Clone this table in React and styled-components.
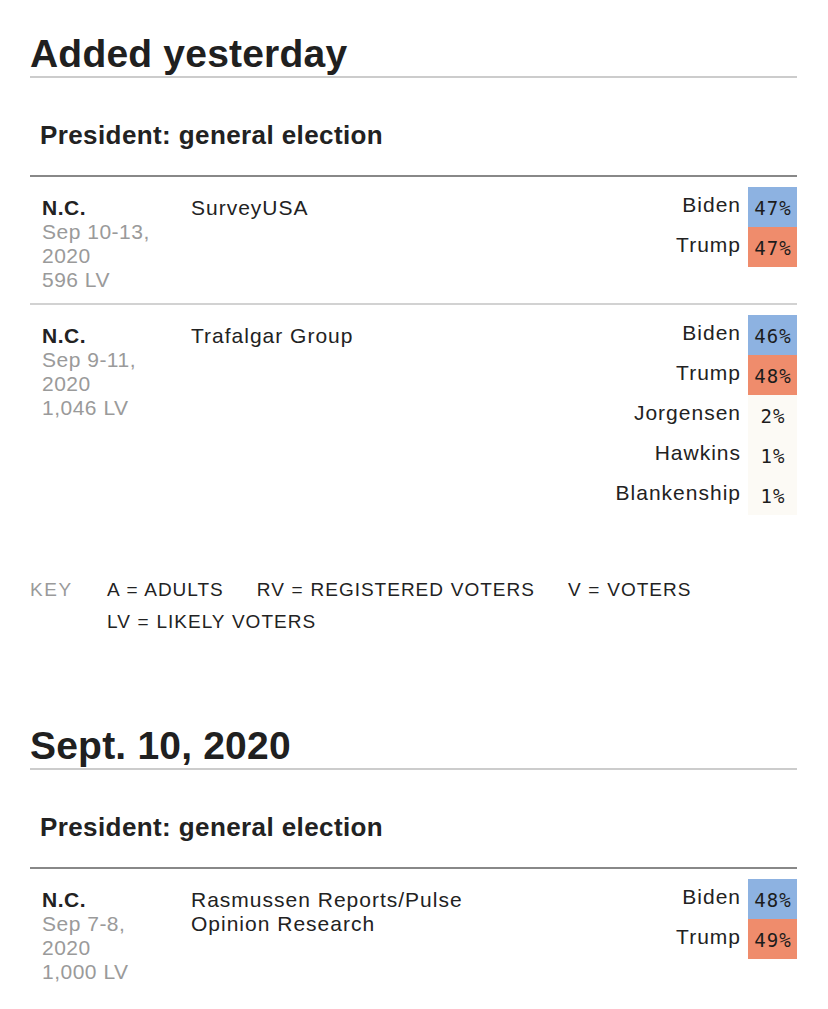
import React from "react";
import styled, { createGlobalStyle } from "styled-components";

const GlobalStyle = createGlobalStyle`
  html, body {
    margin: 0;
    padding: 0;
    background: #ffffff;
  }
  body {
    font-family: "Liberation Sans", Arial, sans-serif;
    color: #222222;
  }
`;

const Page = styled.main`
  box-sizing: border-box;
  width: 828px;
  padding: 31px 31px 40px 30px;
`;

const Section = styled.section`
  & + & {
    margin-top: 85px;
  }
`;

const DayHeading = styled.h2`
  margin: 0;
  font-family: "Liberation Sans", Arial, sans-serif;
  font-weight: 700;
  font-size: 39px;
  line-height: 45px;
  letter-spacing: 0.2px;
  color: #202020;
  border-bottom: 2px solid #cccccc;
`;

const RaceTitle = styled.h3`
  margin: 42px 0 25px;
  padding-left: 10px;
  font-weight: 700;
  font-size: 26px;
  line-height: 30px;
  letter-spacing: 0.4px;
  color: #222222;
`;

const PollTable = styled.div`
  border-top: 2px solid #888888;
`;

const PollRow = styled.div`
  display: grid;
  grid-template-columns: 149px 300px 1fr;
  align-items: start;
  padding: 10px 0 ${(p) => (p.$last ? "10px" : "11px")} 12px;
  border-bottom: ${(p) => (p.$last ? "none" : "2px solid #d2d2d2")};
`;

const InfoCol = styled.div`
  padding-top: 9px;
  font-size: 21px;
  line-height: 24px;
  letter-spacing: 0.5px;
`;

const State = styled.div`
  font-weight: 700;
  color: #222222;
`;

const Meta = styled.div`
  color: #9a9a9a;
`;

const Pollster = styled.div`
  padding-top: 9px;
  font-size: 21px;
  line-height: 24px;
  letter-spacing: 1px;
  color: #222222;
`;

const Results = styled.div`
  justify-self: end;
  display: grid;
  grid-template-columns: auto 49px;
  column-gap: 7px;
`;

const Candidate = styled.div`
  height: 40px;
  line-height: 36px;
  text-align: right;
  font-size: 21px;
  letter-spacing: 1px;
  color: #222222;
`;

const fills = {
  dem: "#8db2e1",
  rep: "#ef8c6c",
  other: "#fcfaf5",
};

const Pct = styled.div`
  box-sizing: border-box;
  height: 40px;
  padding: 3px 0 0 1px;
  line-height: 37px;
  text-align: center;
  font-family: "DejaVu Sans Mono", "Liberation Mono", monospace;
  font-size: 19px;
  letter-spacing: 1px;
  color: #1c1c1c;
  background: ${(p) => fills[p.$party] || fills.other};
`;

const Key = styled.div`
  display: flex;
  margin-top: 49px;
  font-size: 19px;
  line-height: 32px;
`;

const KeyLabel = styled.div`
  flex: 0 0 77px;
  color: #9a9a9a;
  letter-spacing: 1.6px;
`;

const KeyItems = styled.div`
  display: flex;
  flex-wrap: wrap;
  column-gap: 33px;
  flex: 1;
`;

const KeyItem = styled.span`
  letter-spacing: 1px;
  word-spacing: 0.5px;
  color: #222222;
  white-space: nowrap;
`;

const sections = [
  {
    day: "Added yesterday",
    race: "President: general election",
    key: true,
    polls: [
      {
        state: "N.C.",
        dates: ["Sep 10-13,", "2020"],
        sample: "596 LV",
        pollster: "SurveyUSA",
        results: [
          ["Biden", "47%", "dem"],
          ["Trump", "47%", "rep"],
        ],
      },
      {
        state: "N.C.",
        dates: ["Sep 9-11,", "2020"],
        sample: "1,046 LV",
        pollster: "Trafalgar Group",
        results: [
          ["Biden", "46%", "dem"],
          ["Trump", "48%", "rep"],
          ["Jorgensen", "2%", "other"],
          ["Hawkins", "1%", "other"],
          ["Blankenship", "1%", "other"],
        ],
      },
    ],
  },
  {
    day: "Sept. 10, 2020",
    race: "President: general election",
    key: false,
    polls: [
      {
        state: "N.C.",
        dates: ["Sep 7-8,", "2020"],
        sample: "1,000 LV",
        pollster: "Rasmussen Reports/Pulse Opinion Research",
        results: [
          ["Biden", "48%", "dem"],
          ["Trump", "49%", "rep"],
        ],
      },
    ],
  },
];

const keyItems = [
  "A = ADULTS",
  "RV = REGISTERED VOTERS",
  "V = VOTERS",
  "LV = LIKELY VOTERS",
];

export default function App() {
  return (
    <>
      <GlobalStyle />
      <Page>
        {sections.map((s) => (
          <Section key={s.day}>
            <DayHeading>{s.day}</DayHeading>
            <RaceTitle>{s.race}</RaceTitle>
            <PollTable>
              {s.polls.map((p, i) => (
                <PollRow key={p.pollster} $last={i === s.polls.length - 1}>
                  <InfoCol>
                    <State>{p.state}</State>
                    {p.dates.map((d) => (
                      <Meta key={d}>{d}</Meta>
                    ))}
                    <Meta>{p.sample}</Meta>
                  </InfoCol>
                  <Pollster>{p.pollster}</Pollster>
                  <Results>
                    {p.results.map(([name, pct, party]) => (
                      <React.Fragment key={name}>
                        <Candidate>{name}</Candidate>
                        <Pct $party={party}>{pct}</Pct>
                      </React.Fragment>
                    ))}
                  </Results>
                </PollRow>
              ))}
            </PollTable>
            {s.key && (
              <Key>
                <KeyLabel>KEY</KeyLabel>
                <KeyItems>
                  {keyItems.map((k) => (
                    <KeyItem key={k}>{k}</KeyItem>
                  ))}
                </KeyItems>
              </Key>
            )}
          </Section>
        ))}
      </Page>
    </>
  );
}
